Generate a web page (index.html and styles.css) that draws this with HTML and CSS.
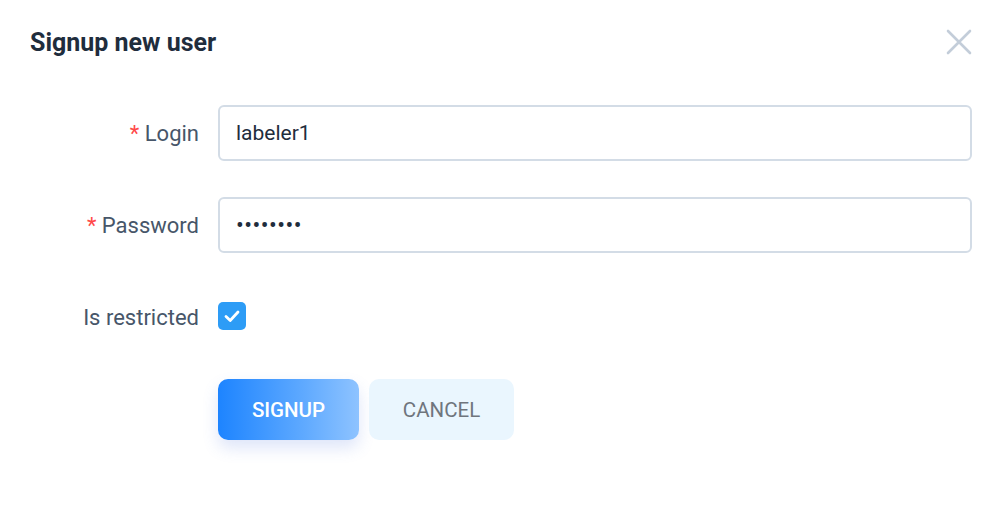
FILE: index.html
```html
<!DOCTYPE html>
<html>
<head>
<meta charset="utf-8">
<link rel="stylesheet" href="styles.css">
</head>
<body>
<div class="dialog">
  <div class="header">
    <h1 class="title">Signup new user</h1>
    <button class="close" aria-label="Close">
      <svg width="26" height="26" viewBox="0 0 26 26"><path d="M2 2 L24 24 M24 2 L2 24" stroke="#c3cdd9" stroke-width="2.6" stroke-linecap="round"/></svg>
    </button>
  </div>
  <form class="form">
    <div class="row">
      <label class="label"><span class="req">*</span> Login</label>
      <div class="field"><input class="input" type="text" value="labeler1"></div>
    </div>
    <div class="row">
      <label class="label"><span class="req">*</span> Password</label>
      <div class="field"><input class="input pw" type="password" value="password"></div>
    </div>
    <div class="row">
      <label class="label">Is restricted</label>
      <div class="field">
        <span class="check">
          <svg width="28" height="28" viewBox="0 0 28 28"><path d="M8 14.5 L12.2 18.5 L20 10" fill="none" stroke="#fff" stroke-width="2.8" stroke-linecap="round" stroke-linejoin="round"/></svg>
        </span>
      </div>
    </div>
    <div class="actions">
      <button type="button" class="btn primary">SIGNUP</button>
      <button type="button" class="btn secondary">CANCEL</button>
    </div>
  </form>
</div>
</body>
</html>
```

FILE: styles.css
```css
html, body {
  margin: 0;
  padding: 0;
  background: #ffffff;
  font-family: Roboto, "Liberation Sans", sans-serif;
}
.dialog {
  width: 1000px;
  height: 520px;
  box-sizing: border-box;
  padding: 0 28px 0 30px;
}
.header {
  display: flex;
  align-items: center;
  justify-content: space-between;
  height: 84px;
}
.title {
  margin: 0;
  font-size: 25px;
  font-weight: 700;
  color: #1f2d3d;
}
.close {
  border: 0;
  background: none;
  padding: 0;
  width: 26px;
  height: 26px;
  cursor: pointer;
}
.close svg { display: block; }
.form {
  display: flex;
  flex-direction: column;
  gap: 36px;
  padding-top: 21px;
}
.row {
  display: flex;
  align-items: center;
  height: 56px;
}
.label {
  width: 169px;
  flex: none;
  text-align: right;
  padding-right: 19px;
  box-sizing: content-box;
  font-size: 22px;
  color: #475669;
}
.req {
  color: #ff4949;
}
.field {
  flex: 1;
  display: flex;
  align-items: center;
}
.input {
  width: 100%;
  height: 56px;
  box-sizing: border-box;
  border: 2px solid #d3dce6;
  border-radius: 6px;
  padding: 0 16px;
  font-family: Roboto, "Liberation Sans", sans-serif;
  font-size: 21px;
  color: #1f2d3d;
  outline: none;
}
.input.pw {
  font-size: 23px;
  letter-spacing: 0.5px;
}
.check {
  width: 28px;
  height: 28px;
  border-radius: 5px;
  background: #2d9cf6;
  display: block;
  margin-top: -2px;
}
.check svg { display: block; }
.actions {
  display: flex;
  gap: 10px;
  padding-left: 188px;
  margin-top: -2px;
}
.btn {
  height: 61px;
  border: 0;
  border-radius: 10px;
  font-family: Roboto, "Liberation Sans", sans-serif;
  font-size: 20.5px;
  cursor: pointer;
}
.primary {
  width: 141px;
  color: #ffffff;
  font-weight: 500;
  background: linear-gradient(90deg, #1d84ff 0%, #5ea9ff 60%, #8ec3ff 100%);
  box-shadow: 0 8px 16px rgba(70, 110, 220, 0.18);
}
.secondary {
  width: 145px;
  color: #6f757d;
  background: #eaf6fe;
}
```
